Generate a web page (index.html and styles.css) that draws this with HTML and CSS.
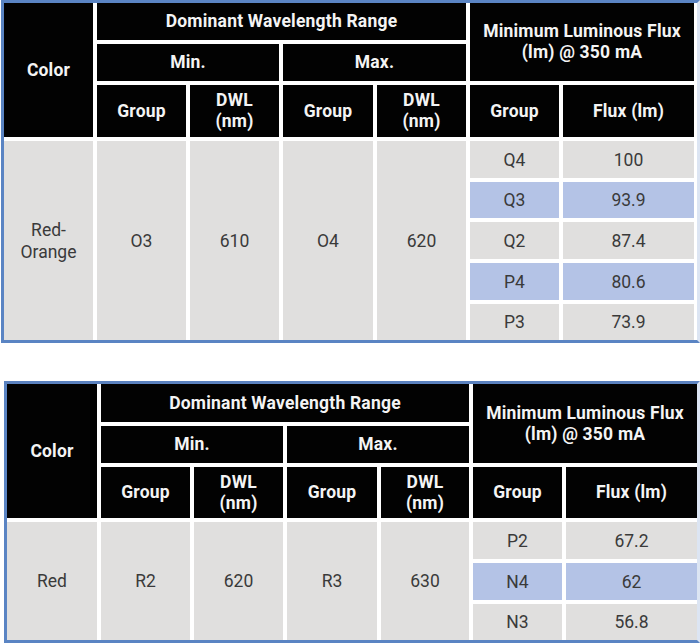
FILE: index.html
```html
<!DOCTYPE html>
<html>
<head>
<meta charset="utf-8">
<link rel="stylesheet" href="styles.css">
</head>
<body>
<div class="page">
  <div class="frame frame-1">
    <div class="grid grid-1">
      <div class="h c-color">Color</div>
      <div class="h c-dom">Dominant Wavelength Range</div>
      <div class="h c-lum">Minimum Luminous Flux<br>(lm) @ 350 mA</div>
      <div class="h c-min">Min.</div>
      <div class="h c-max">Max.</div>
      <div class="h">Group</div>
      <div class="h">DWL<br>(nm)</div>
      <div class="h">Group</div>
      <div class="h">DWL<br>(nm)</div>
      <div class="h">Group</div>
      <div class="h">Flux (lm)</div>
      <div class="d span-1">Red-<br>Orange</div>
      <div class="d span-1">O3</div>
      <div class="d span-1">610</div>
      <div class="d span-1">O4</div>
      <div class="d span-1">620</div>
      <div class="d">Q4</div>
      <div class="d">100</div>
      <div class="d hl">Q3</div>
      <div class="d hl">93.9</div>
      <div class="d">Q2</div>
      <div class="d">87.4</div>
      <div class="d hl">P4</div>
      <div class="d hl">80.6</div>
      <div class="d">P3</div>
      <div class="d">73.9</div>
    </div>
  </div>

  <div class="frame frame-2">
    <div class="grid grid-2">
      <div class="h c-color">Color</div>
      <div class="h c-dom">Dominant Wavelength Range</div>
      <div class="h c-lum">Minimum Luminous Flux<br>(lm) @ 350 mA</div>
      <div class="h c-min">Min.</div>
      <div class="h c-max">Max.</div>
      <div class="h">Group</div>
      <div class="h">DWL<br>(nm)</div>
      <div class="h">Group</div>
      <div class="h">DWL<br>(nm)</div>
      <div class="h">Group</div>
      <div class="h">Flux (lm)</div>
      <div class="d span-2">Red</div>
      <div class="d span-2">R2</div>
      <div class="d span-2">620</div>
      <div class="d span-2">R3</div>
      <div class="d span-2">630</div>
      <div class="d">P2</div>
      <div class="d">67.2</div>
      <div class="d hl">N4</div>
      <div class="d hl">62</div>
      <div class="d">N3</div>
      <div class="d">56.8</div>
    </div>
  </div>
</div>
</body>
</html>
```

FILE: styles.css
```css
html, body {
  margin: 0;
  padding: 0;
  background: #ffffff;
}

body {
  font-family: Roboto, "Liberation Sans", Arial, sans-serif;
  width: 700px;
  height: 643px;
  overflow: hidden;
}

.page {
  display: flex;
  flex-direction: column;
}

.frame {
  border: 3px solid #5a84c3;
  border-right: 3px solid #dce5f3;
  background: #ffffff;
  align-self: flex-start;
}

.frame-1 {
  margin-left: 1px;
  padding-right: 3px;
}

.frame-2 {
  margin-left: 4px;
  margin-top: 38px;
  border-top-color: #5b82bf;
}

.grid {
  display: grid;
  grid-template-columns: 89px 89px 89px 90px 89px 89px 131px;
  column-gap: 4px;
  row-gap: 4px;
}

.grid-1 {
  grid-template-rows: 37px 37px 52px 37px 36px 37px 37px 36px;
}

.grid-2 {
  grid-template-columns: 90px 89px 89px 90px 88px 89px 131px;
  grid-template-rows: 38px 37px 51px 37px 37px 36px;
}

.h, .d {
  display: flex;
  align-items: center;
  justify-content: center;
  text-align: center;
}

.h {
  background: #020202;
  color: #f4f4f4;
  font-weight: 700;
  font-size: 17.5px;
  letter-spacing: 0.2px;
  line-height: 21px;
}

.d {
  background: #e0dfde;
  color: #3a3a3a;
  font-size: 17.5px;
  line-height: 22px;
}

.d.hl {
  background: #b4c3e6;
}

.c-color {
  grid-column: 1;
  grid-row: 1 / 4;
}

.c-dom {
  grid-column: 2 / 6;
  grid-row: 1;
}

.c-lum {
  grid-column: 6 / 8;
  grid-row: 1 / 3;
}

.c-min {
  grid-column: 2 / 4;
  grid-row: 2;
}

.c-max {
  grid-column: 4 / 6;
  grid-row: 2;
}

.span-1 {
  grid-row: 4 / span 5;
}

.span-2 {
  grid-row: 4 / span 3;
}
```
